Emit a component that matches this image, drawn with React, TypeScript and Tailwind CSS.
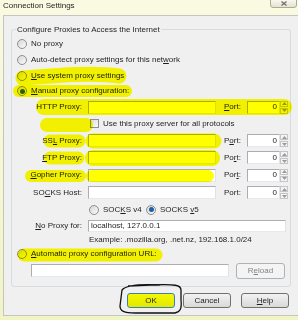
import React from "react";

function Radio({ checked = false, blue = false }: { checked?: boolean; blue?: boolean }) {
  return (
    <span className="w-[10px] h-[10px] shrink-0 rounded-full border border-[#8e8f8f] bg-gradient-to-br from-[#d6d6d6] to-[#fbfbfb] flex items-center justify-center">
      {checked && (
        <span className={"w-[5px] h-[5px] rounded-full " + (blue ? "bg-[#1d5fa8]" : "bg-[#2b5f2e]")} />
      )}
    </span>
  );
}

function Field({ w, h = "h-[13px]", children }: { w: string; h?: string; children?: React.ReactNode }) {
  return (
    <div className={w + " " + h + " shrink-0 bg-white border border-[#abadb3] border-r-[#dfe2e8] border-b-[#e3e9ef] flex items-center justify-end pr-[2px] leading-none"}>
      {children}
    </div>
  );
}

function Spinner() {
  return (
    <div className="w-[8px] h-[13px] shrink-0 flex flex-col gap-[1px]">
      <div className="h-[6px] border border-[#c5c5c5] bg-[#f4f4f4] flex items-center justify-center">
        <svg width="5" height="3" viewBox="0 0 5 3"><path d="M0 3 L2.5 0 L5 3 Z" fill="#9a9a9a" /></svg>
      </div>
      <div className="h-[6px] border border-[#c5c5c5] bg-[#f4f4f4] flex items-center justify-center">
        <svg width="5" height="3" viewBox="0 0 5 3"><path d="M0 0 L2.5 3 L5 0 Z" fill="#9a9a9a" /></svg>
      </div>
    </div>
  );
}

function ProxyRow({ label, h, port }: { label: React.ReactNode; h: string; port: React.ReactNode }) {
  return (
    <div className={h + " flex items-center"}>
      <span className="w-[70px] text-right">{label}</span>
      <div className="ml-[6px]"><Field w="w-[128px]" /></div>
      <span className="ml-[8px] w-[23px]">{port}</span>
      <Field w="w-[33px]">0</Field>
      <Spinner />
    </div>
  );
}

function Btn({ children, cls }: { children: React.ReactNode; cls: string }) {
  return (
    <div className={"w-[48px] h-[15px] rounded-[3px] border flex items-center justify-center " + cls}>
      {children}
    </div>
  );
}

export default function App() {
  return (
    <div className="relative isolate w-[298px] h-[320px] overflow-hidden bg-gradient-to-b from-[#fafae2] to-[#f1f5c4] font-['Liberation_Sans',Arial,sans-serif] text-[8px] text-[#1e1e1e] leading-none">
      {/* title bar */}
      <div className="h-[15px] flex items-start justify-between">
        <span className="pl-[3px] pt-[2px]">Connection Settings</span>
        <div className="w-[27px] h-[9px] -mt-[1px] mr-[1px] border border-[#a9aa9a] rounded-b-[3px] bg-gradient-to-b from-[#f7f7ef] to-[#e4e4cf] flex items-center justify-center">
          <svg width="6" height="5" viewBox="0 0 6 5"><path d="M0.5 0.5 L5.5 4.5 M5.5 0.5 L0.5 4.5" stroke="#6b6b6b" strokeWidth="1.2" /></svg>
        </div>
      </div>

      {/* dialog body */}
      <div className="ml-[3px] h-[301px] border border-[#c4c4c4] border-r-0 bg-[#f0f0f0] px-[7px] pt-[13px]">
        <div className="w-[280px] h-[258px] border border-[#d5dde3] rounded-[3px]">
          <div className="-mt-[6px] ml-[4px] px-[1px] w-fit h-[11px] flex items-center bg-[#f0f0f0]">
            Configure Proxies to Access the Internet
          </div>

          <div className="h-[17px] flex items-center pl-[5px] gap-[4px]"><Radio /><span>No proxy</span></div>
          <div className="h-[16px] flex items-center pl-[5px] gap-[4px]"><Radio /><span>Auto-detect proxy settings for this net<u>w</u>ork</span></div>
          <div className="h-[15px] flex items-center pl-[5px] gap-[4px]"><Radio /><span><u>U</u>se system proxy settings</span></div>
          <div className="h-[16px] flex items-center pl-[5px] gap-[4px]"><Radio checked /><span><u>M</u>anual proxy configuration:</span></div>

          <ProxyRow h="h-[16px]" label="HTTP Proxy:" port={<span><u>P</u>ort:</span>} />
          <div className="h-[17px] flex items-center pl-[78px] gap-[4px]">
            <span className="w-[9px] h-[9px] border border-[#8e8f8f] bg-gradient-to-br from-[#dcdcdc] to-[#fbfbfb]" />
            <span>Use this proxy server for all protocols</span>
          </div>
          <ProxyRow h="h-[17px]" label={<span>SS<u>L</u> Proxy:</span>} port={<span>P<u>o</u>rt:</span>} />
          <ProxyRow h="h-[17px]" label={<span><u>F</u>TP Proxy:</span>} port={<span>Po<u>r</u>t:</span>} />
          <ProxyRow h="h-[18px]" label={<span><u>G</u>opher Proxy:</span>} port={<span>Por<u>t</u>:</span>} />
          <ProxyRow h="h-[17px]" label={<span>SO<u>C</u>KS Host:</span>} port={<span>Port:</span>} />

          <div className="h-[17px] flex items-center pl-[77px]">
            <div className="w-[57px] flex items-center gap-[4px]"><Radio /><span>SOC<u>K</u>S v4</span></div>
            <div className="flex items-center gap-[4px]"><Radio checked blue /><span>SOCKS <u>v</u>5</span></div>
          </div>
          <div className="h-[15px] flex items-center">
            <span className="w-[70px] text-right"><u>N</u>o Proxy for:</span>
            <div className="ml-[6px]">
              <Field w="w-[198px]" h="h-[12px]">
                <span className="w-full pl-[2px]">localhost, 127.0.0.1</span>
              </Field>
            </div>
          </div>
          <div className="h-[14px] flex items-center pl-[77px]">Example: .mozilla.org, .net.nz, 192.168.1.0/24</div>
          <div className="h-[14px] flex items-center pl-[5px] gap-[4px]"><Radio /><span><u>A</u>utomatic proxy configuration URL:</span></div>
          <div className="h-[19px] flex items-center pl-[19px]">
            <Field w="w-[198px]" />
            <div className="ml-[7px] w-[49px] h-[16px] rounded-[3px] border border-[#adb2b5] bg-[#f4f4f4] text-[#838383] flex items-center justify-center">
              <span>R<u>e</u>load</span>
            </div>
          </div>
        </div>

        <div className="mt-[6px] pr-[2px] flex justify-end">
          <Btn cls="border-[#3c7fb1] bg-gradient-to-b from-[#f4f800] to-[#e2e800]">OK</Btn>
          <div className="ml-[8px]"><Btn cls="border-[#707070] bg-gradient-to-b from-[#f2f2f2] to-[#d9d9d9]">Cancel</Btn></div>
          <div className="ml-[10px]"><Btn cls="border-[#707070] bg-gradient-to-b from-[#f2f2f2] to-[#d9d9d9]"><span><u>H</u>elp</span></Btn></div>
        </div>
      </div>

      {/* highlighter marks drawn over the dialog */}
      <svg className="absolute inset-0 mix-blend-multiply pointer-events-none" width="298" height="320" viewBox="0 0 298 320">
        <g stroke="#ffff00" strokeLinecap="round" fill="none">
          <path d="M23 78 C50 76 90 72 119 76" strokeWidth="15" />
          <path d="M19 91 L126 91" strokeWidth="12" />
          <path d="M44 107 L284 107" strokeWidth="16" />
          <path d="M47 125 L86 125" strokeWidth="14" />
          <path d="M50 141 L79 141" strokeWidth="13" />
          <path d="M93 141 L214 141" strokeWidth="15" />
          <path d="M50 158 L78 158" strokeWidth="13" />
          <path d="M93 158 L212 158" strokeWidth="16" />
          <path d="M31 176 L80 176" strokeWidth="12" />
          <path d="M92 176 L208 176" strokeWidth="12" />
          <path d="M24 255 L156 255" strokeWidth="13" />
        </g>
        <path
          d="M160 285 C140 284 126 285 122 290 L120 306 C120 311 124 313 135 313 L175 313 C180 312 182 309 181 300 L181 290 C181 285 176 284 150 285 L128 286"
          stroke="#111" strokeWidth="1.3" fill="none"
        />
      </svg>
    </div>
  );
}
